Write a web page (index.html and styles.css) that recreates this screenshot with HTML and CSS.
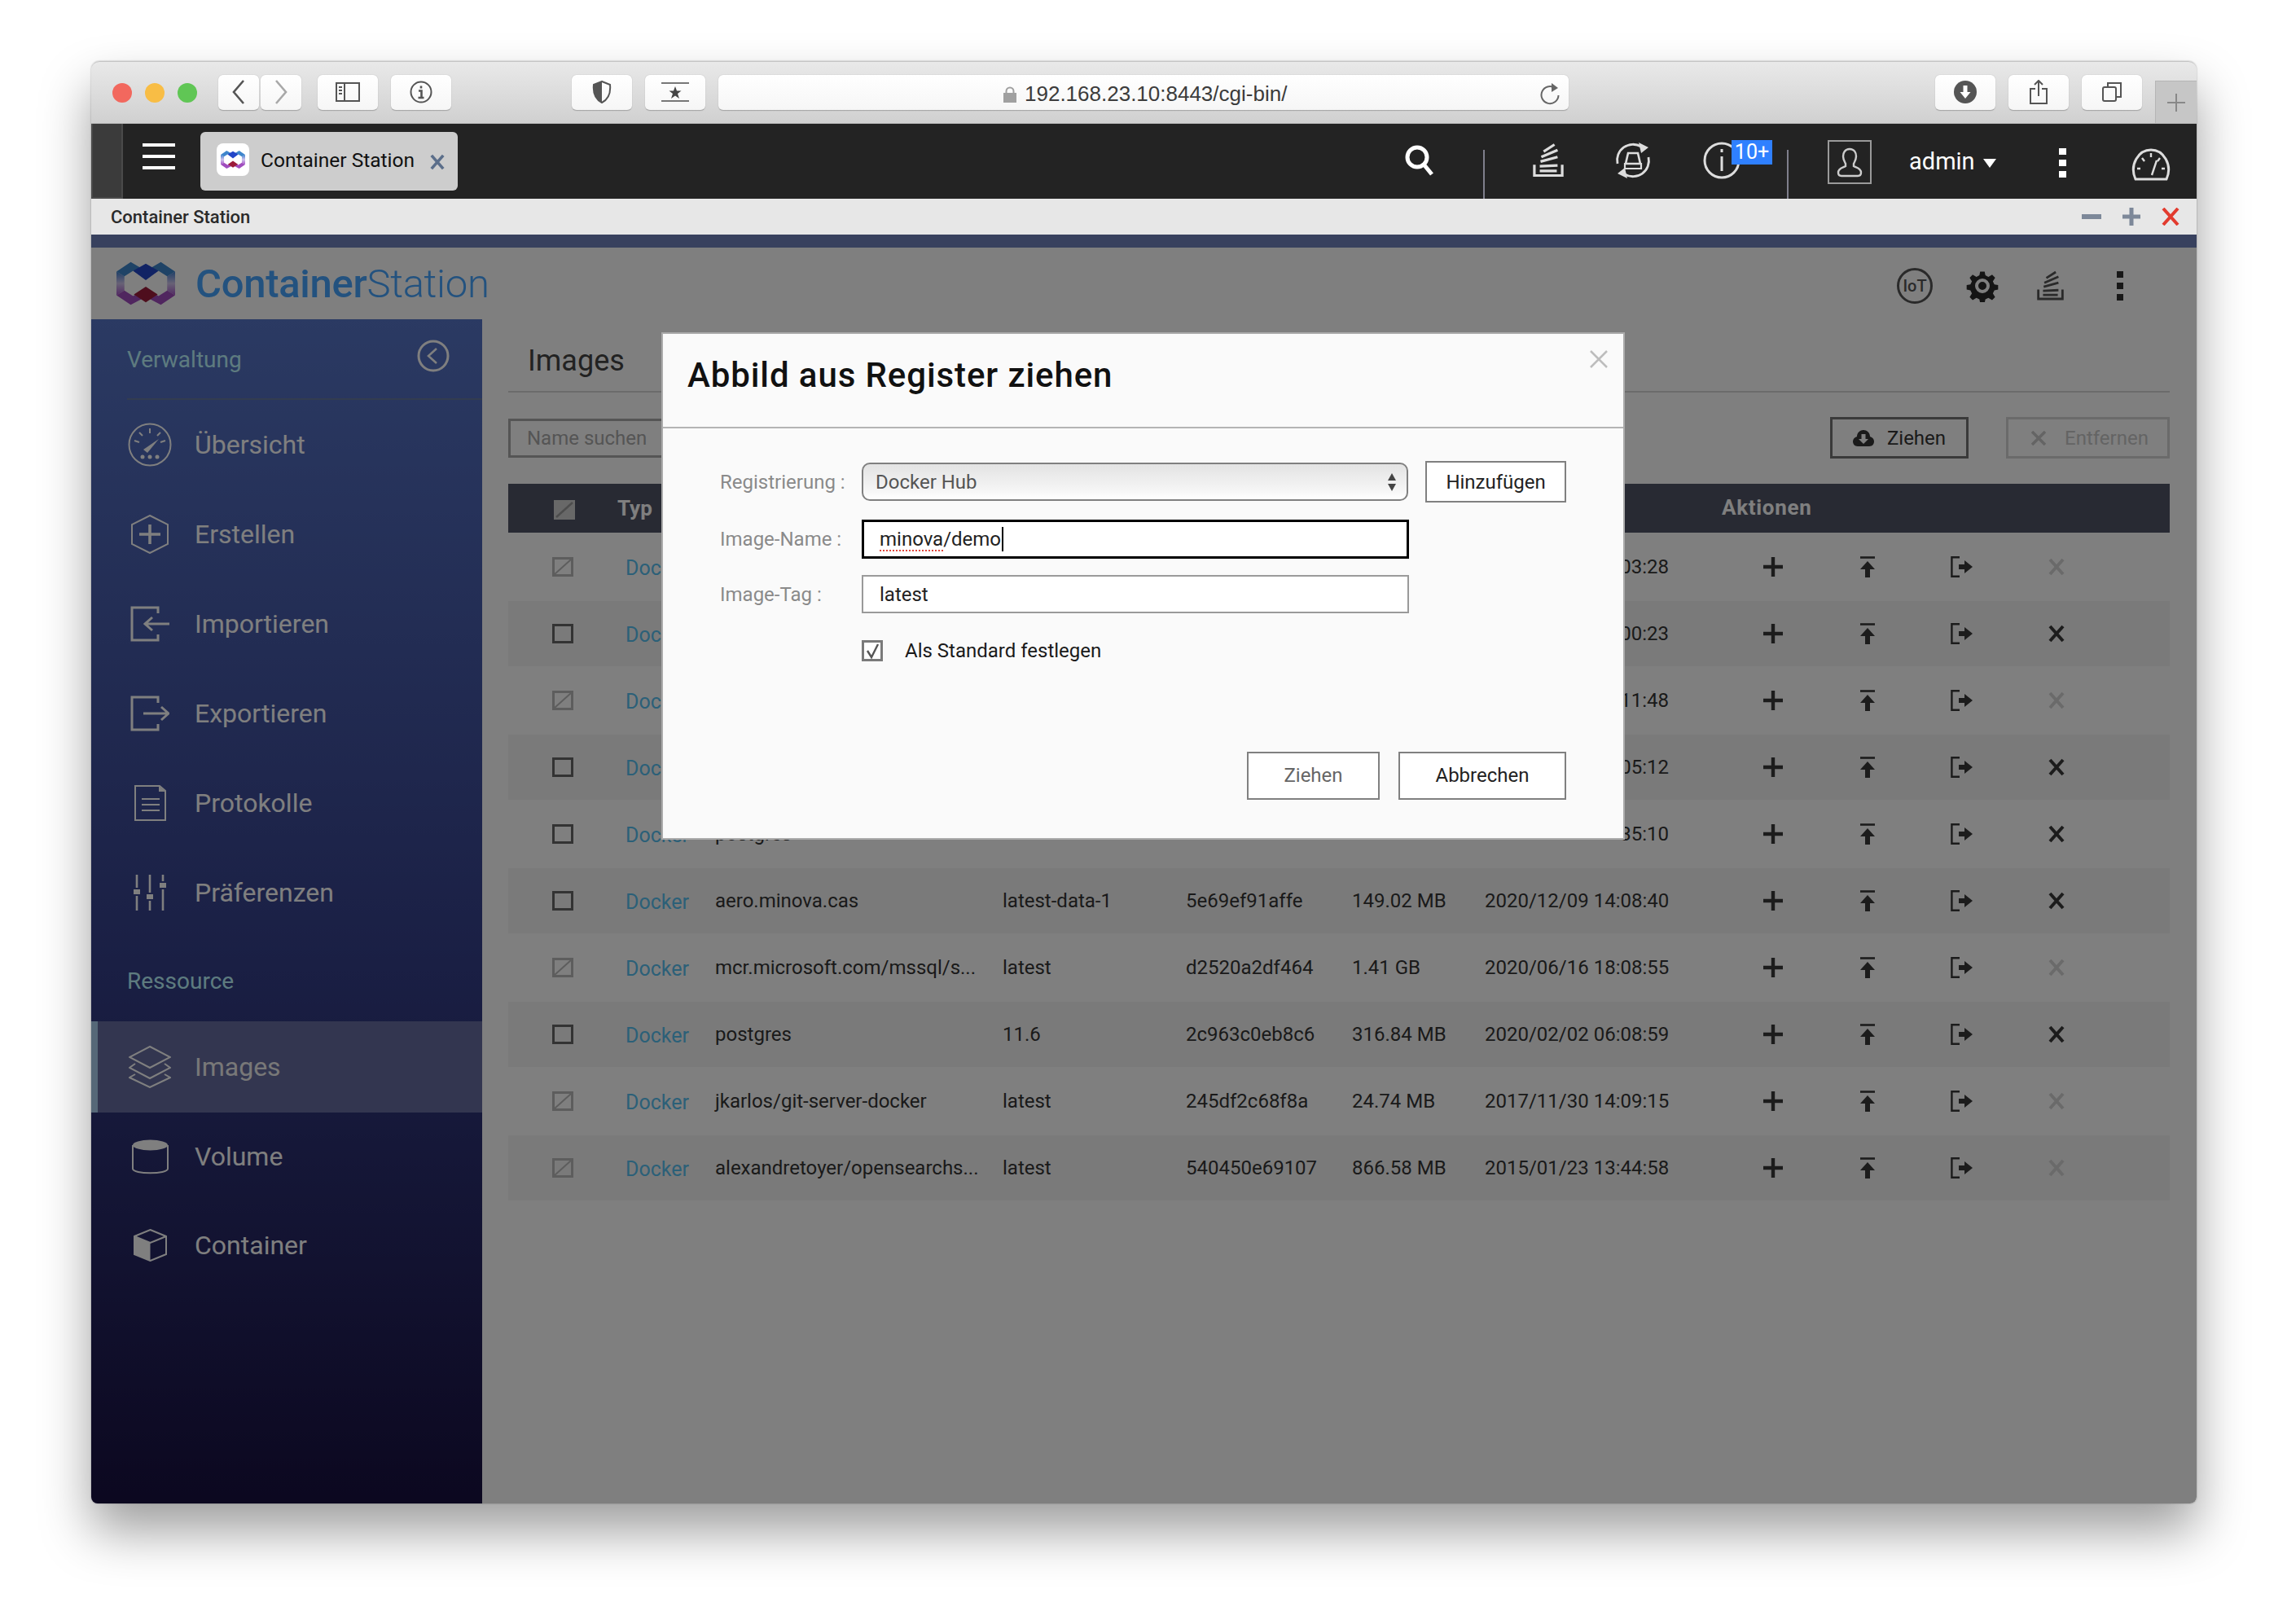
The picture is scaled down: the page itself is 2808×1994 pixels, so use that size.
FILE: index.html
```html
<!DOCTYPE html>
<html lang="de">
<head>
<meta charset="utf-8">
<title>Container Station</title>
<link rel="stylesheet" href="styles.css">
</head>
<body>
<svg class="sprite" xmlns="http://www.w3.org/2000/svg">
  <defs>
    <linearGradient id="lg-side" x1="0" y1="0" x2="0" y2="1">
      <stop offset="0" stop-color="#3f7fd0"/><stop offset=".5" stop-color="#d0c4ec"/><stop offset="1" stop-color="#a655c8"/>
    </linearGradient>
    <symbol id="i-logo" viewBox="0 0 74 56">
      <polygon points="0,13 10,19 10,37 0,43" fill="url(#lg-side)"/>
      <polygon points="74,13 64,19 64,37 74,43" fill="url(#lg-side)"/>
      <polygon points="0,13 18,1 37,12 56,1 74,13 64,19 53,12 37,22 21,12 10,19" fill="#3f86cc"/>
      <polygon points="21,12 37,3 53,12 37,24" fill="#2346c8"/>
      <polygon points="0,43 10,37 21,44 37,34 53,44 64,37 74,43 56,55 37,45 18,55" fill="#a04dbe"/>
      <polygon points="22,42 37,32 52,42 37,52" fill="#9c1c3a"/>
    </symbol>
    <symbol id="i-plus" viewBox="0 0 26 26"><path d="M13 1v24M1 13h24" fill="none" stroke="currentColor" stroke-width="4.4"/></symbol>
    <symbol id="i-up" viewBox="0 0 20 26"><path d="M1 1.500h18" stroke="currentColor" stroke-width="2.600" fill="none"/><path d="M10 6l9 10h-6v10H7V16H1z" fill="currentColor"/></symbol>
    <symbol id="i-exp" viewBox="0 0 28 26"><path d="M11 1.200H1.400v23.600H11" fill="none" stroke="currentColor" stroke-width="2.400"/><path d="M10 10h7V5l10 8-10 8v-5h-7z" fill="currentColor"/></symbol>
    <symbol id="i-x" viewBox="0 0 20 22"><path d="M2 2l16 18M18 2L2 20" fill="none" stroke="currentColor" stroke-width="4"/></symbol>
    <symbol id="i-cb" viewBox="0 0 26 24"><rect x="1.500" y="1.500" width="23" height="21" fill="none" stroke="currentColor" stroke-width="3"/></symbol>
    <symbol id="i-cbd" viewBox="0 0 26 24"><rect x="1.500" y="1.500" width="23" height="21" fill="none" stroke="currentColor" stroke-width="3"/><path d="M3 21L23 3" stroke="currentColor" stroke-width="2" fill="none"/></symbol>
    <symbol id="i-stack" viewBox="0 0 40 44"><path d="M2 28v14h36V28" fill="none" stroke="currentColor" stroke-width="3.400"/><path d="M9 36h22M9 30l23-1M10 24l22-6M11 18l21-9M14 11l14-9" fill="none" stroke="currentColor" stroke-width="3.400"/></symbol>
    <symbol id="i-gear" viewBox="0 0 40 40"><path d="M17 1h6l1 5 4 2 5-3 4 4-3 5 2 4 5 1v6l-5 1-2 4 3 5-4 4-5-3-4 2-1 5h-6l-1-5-4-2-5 3-4-4 3-5-2-4-5-1v-6l5-1 2-4-3-5 4-4 5 3 4-2z" transform="translate(1.600 1.600) scale(.92)" fill="currentColor"/><circle cx="20" cy="20" r="7" fill="none" stroke="#fff" stroke-width="4"/></symbol>
    <symbol id="i-gauge" viewBox="0 0 50 40"><path d="M6 38C-2 20 10 2 25 2s27 18 19 36z" fill="none" stroke="currentColor" stroke-width="3"/><path d="M26 33l6-18M8 25h4M38 25h4M14 12l3 4M36 12l-3 4M25 6v5" fill="none" stroke="currentColor" stroke-width="2.400"/></symbol>
    <symbol id="i-dash" viewBox="0 0 54 54"><circle cx="27" cy="27" r="25.500" fill="none" stroke="currentColor" stroke-width="2"/><path d="M8 22l6 2M14 12l4 4M27 7v6M40 12l-4 4M46 22l-6 2" fill="none" stroke="currentColor" stroke-width="2"/><path d="M19 33l19-13-14 17z" fill="currentColor"/><circle cx="18" cy="42" r="2.500" fill="currentColor"/><circle cx="27" cy="42" r="2.500" fill="currentColor"/><circle cx="36" cy="42" r="2.500" fill="currentColor"/></symbol>
    <symbol id="i-create" viewBox="0 0 46 48"><path d="M23 1l22 11v24L23 47 1 36V12z" fill="none" stroke="currentColor" stroke-width="2"/><path d="M23 12v24M10 24h26" stroke="currentColor" stroke-width="3.600" fill="none"/></symbol>
    <symbol id="i-import" viewBox="0 0 48 44"><path d="M34 9V2H2v40h32v-7" fill="none" stroke="currentColor" stroke-width="3"/><path d="M48 22H18M27 14l-9 8 9 8" fill="none" stroke="currentColor" stroke-width="3"/></symbol>
    <symbol id="i-export" viewBox="0 0 48 44"><path d="M34 9V2H2v40h32v-7" fill="none" stroke="currentColor" stroke-width="3"/><path d="M16 22h30M38 14l9 8-9 8" fill="none" stroke="currentColor" stroke-width="3"/></symbol>
    <symbol id="i-log" viewBox="0 0 39 44"><path d="M1 1h30l7 6v36H1z" fill="none" stroke="currentColor" stroke-width="2"/><path d="M30 1l8 7h-8z" fill="currentColor"/><path d="M9 17h22M9 24h22M9 31h22" stroke="currentColor" stroke-width="1.800" fill="none"/></symbol>
    <symbol id="i-pref" viewBox="0 0 40 44"><path d="M4 0v16M4 26v18M20 0v22M20 32v12M36 0v8M36 18v26" stroke="currentColor" stroke-width="2.600" fill="none"/><rect x="0" y="18" width="8" height="6" fill="currentColor"/><rect x="16" y="24" width="8" height="6" fill="currentColor"/><rect x="32" y="10" width="8" height="6" fill="currentColor"/></symbol>
    <symbol id="i-layers" viewBox="0 0 52 52"><path d="M26 1l25 13-25 13L1 14z" fill="none" stroke="currentColor" stroke-width="2"/><path d="M8 22l-7 5 25 13 25-13-7-5M8 35l-7 4 25 12 25-12-7-4" fill="none" stroke="currentColor" stroke-width="2"/></symbol>
    <symbol id="i-vol" viewBox="0 0 45 44"><path d="M1 8v29c0 7 43 7 43 0V8" fill="none" stroke="currentColor" stroke-width="2"/><ellipse cx="22.500" cy="8" rx="21.500" ry="6.500" fill="currentColor"/></symbol>
    <symbol id="i-box" viewBox="0 0 41 40"><path d="M20.500 1L40 9v22l-19.500 8L1 31V9z" fill="none" stroke="currentColor" stroke-width="2"/><path d="M1 9l19.500 8L40 9" fill="none" stroke="currentColor" stroke-width="2"/><path d="M1 9l19.500 8v22L1 31z" fill="currentColor"/></symbol>
  </defs>
</svg>

<div class="window">
  <header class="chrome">
    <span class="light red"></span><span class="light yellow"></span><span class="light green"></span>
    <button class="cbtn nav first"><svg width="18" height="32" viewBox="0 0 18 32"><path d="M15 2L3 16l12 14" fill="none" stroke="#555" stroke-width="2.600"/></svg></button>
    <button class="cbtn nav"><svg width="18" height="32" viewBox="0 0 18 32"><path d="M3 2l12 14L3 30" fill="none" stroke="#a8a8a8" stroke-width="2.600"/></svg></button>
    <button class="cbtn w74 gap20"><svg width="30" height="24" viewBox="0 0 30 24"><rect x="1" y="1" width="28" height="22" fill="none" stroke="#555" stroke-width="2"/><path d="M11 1v22M4 6h4M4 10h4M4 14h4" stroke="#555" stroke-width="2" fill="none"/></svg></button>
    <button class="cbtn w74 gap16"><svg width="28" height="28" viewBox="0 0 28 28"><circle cx="14" cy="14" r="12.500" fill="none" stroke="#555" stroke-width="2"/><path d="M14 6.500v3M11 12.500h3.500V21M10.500 21h7" fill="none" stroke="#555" stroke-width="2.600"/></svg></button>
    <button class="cbtn w74 gap148"><svg width="24" height="28" viewBox="0 0 24 28"><path d="M12 1l10 4c1 10-2 18-10 22C4 23 1 15 2 5z" fill="none" stroke="#555" stroke-width="2"/><path d="M12 1L2 5c-1 10 2 18 10 22z" fill="#555"/></svg></button>
    <button class="cbtn w74 gap16"><svg width="36" height="24" viewBox="0 0 36 24"><path d="M1 1h34M1 23h34" stroke="#777" stroke-width="2" fill="none"/><path d="M18 5l2 5.500h5.500l-4.500 3.500 2 6-5-3.500-5 3.500 2-6-4.500-3.500H16z" fill="#444"/></svg></button>
    <div class="address">
      <div class="address-text"><svg class="lock" width="16" height="20" viewBox="0 0 16 20"><path d="M3.500 9V6a4.500 4.500 0 0 1 9 0v3" fill="none" stroke="#a0a0a0" stroke-width="2"/><rect y="8" width="16" height="12" fill="#a0a0a0"/></svg><span>192.168.23.10:8443/cgi-bin/</span></div>
      <svg class="reload" width="26" height="28" viewBox="0 0 26 28"><path d="M19 7A10.500 10.500 0 1 0 23.500 16" fill="none" stroke="#666" stroke-width="2"/><path d="M15 1l8 6-8 5z" fill="#666"/></svg>
    </div>
    <button class="cbtn w74 gap450"><svg width="28" height="28" viewBox="0 0 28 28"><circle cx="14" cy="14" r="14" fill="#555"/><path d="M11.500 6h5v8h4L14 22l-6.500-8h4z" fill="#fff"/></svg></button>
    <button class="cbtn w74 gap16"><svg width="22" height="30" viewBox="0 0 22 30"><path d="M7 11H1v18h20V11h-6M11 20V2M6 6l5-5 5 5" fill="none" stroke="#555" stroke-width="2"/></svg></button>
    <button class="cbtn w74 gap16"><svg width="24" height="24" viewBox="0 0 24 24"><rect x="1" y="6" width="16" height="17" rx="2" fill="none" stroke="#555" stroke-width="2"/><path d="M7 5V1h16v17h-5" fill="none" stroke="#555" stroke-width="2"/></svg></button>
    <div class="newtab"><svg width="24" height="24" viewBox="0 0 24 24"><path d="M12 1v22M1 12h22" stroke="#888" stroke-width="2"/></svg></div>
  </header>

  <nav class="topbar">
    <div class="top-edge"></div>
    <div class="burger"><i></i><i></i><i></i></div>
    <div class="app-tab">
      <span class="tab-icon"><svg width="30" height="24"><use href="#i-logo"/></svg></span>
      <span class="tab-label">Container Station</span>
      <svg class="tab-x" width="18" height="20"><use href="#i-x"/></svg>
    </div>
    <div class="top-icons">
      <svg class="ti-search" width="36" height="38" viewBox="0 0 36 38"><circle cx="15" cy="15" r="12" fill="none" stroke="#fff" stroke-width="5"/><path d="M24 25l9 11" stroke="#fff" stroke-width="5"/></svg>
      <span class="vsep vsep1"></span>
      <svg class="ti ti-stack" width="38" height="43"><use href="#i-stack"/></svg>
      <svg class="ti ti-sync" width="46" height="46" viewBox="0 0 46 46"><path d="M4 27A19.500 19.500 0 0 1 33 6M42 19A19.500 19.500 0 0 1 13 40" fill="none" stroke="#ddd" stroke-width="2.800"/><path d="M30 1l12 6-9 7zM16 45L4 39l9-7z" fill="#ddd"/><path d="M17 14h12l3 13H14z" fill="none" stroke="#ddd" stroke-width="2.600"/><path d="M13 27h20v6H13z" fill="none" stroke="#ddd" stroke-width="2.200"/></svg>
      <span class="info-wrap">
        <svg class="ti" width="46" height="46" viewBox="0 0 46 46"><circle cx="23" cy="23" r="21" fill="none" stroke="#ddd" stroke-width="3"/><path d="M23 9v4M23 18v18" stroke="#ddd" stroke-width="3"/></svg>
        <span class="badge">10+</span>
      </span>
      <span class="vsep vsep2"></span>
      <span class="avatar"><svg width="44" height="44" viewBox="0 0 44 44"><path d="M22 6c-6 0-8 5-8 9 0 4 2 7 3 9v3c-3 2-9 2-9 8 0 3 2 4 4 4h20c2 0 4-1 4-4 0-6-6-6-9-8v-3c1-2 3-5 3-9 0-4-2-9-8-9z" fill="none" stroke="#ccc" stroke-width="2.400"/></svg></span>
      <span class="admin">admin</span><span class="caret"></span>
      <span class="kebab light-k"><i></i><i></i><i></i></span>
      <svg class="ti ti-gauge" width="50" height="40"><use href="#i-gauge"/></svg>
    </div>
  </nav>

  <div class="titlebar">
    <span class="title-text">Container Station</span>
    <div class="win-ctl">
      <span class="ctl-min"></span>
      <svg class="ctl-plus" width="22" height="22" viewBox="0 0 22 22"><path d="M11 0v22M0 11h22" stroke="#7d8899" stroke-width="5"/></svg>
      <svg class="ctl-x" width="22" height="22" viewBox="0 0 22 22"><path d="M2 1l18 20M20 1L2 21" stroke="#e23b2e" stroke-width="4"/></svg>
    </div>
  </div>
  <div class="stripe"></div>

  <div class="app">
    <div class="app-head">
      <svg class="logo" width="74" height="56"><use href="#i-logo"/></svg>
      <span class="logo-text"><b>Container</b>Station</span>
      <div class="head-icons">
        <span class="iot">IoT</span>
        <svg class="gear" width="40" height="40"><use href="#i-gear"/></svg>
        <svg class="hstack" width="33" height="37"><use href="#i-stack"/></svg>
        <span class="kebab dark-k"><i></i><i></i><i></i></span>
      </div>
    </div>
    <div class="app-body">
      <aside class="side">
        <div class="side-head">
          <span class="side-label">Verwaltung</span>
          <svg class="collapse" width="40" height="40" viewBox="0 0 40 40"><circle cx="20" cy="20" r="18" fill="none" stroke="#fff" stroke-width="3"/><path d="M24 11l-10 9 10 9" fill="none" stroke="#fff" stroke-width="2.500"/></svg>
        </div>
        <div class="item"><span class="ico"><svg width="54" height="54"><use href="#i-dash"/></svg></span>Übersicht</div>
        <div class="item"><span class="ico"><svg width="46" height="48"><use href="#i-create"/></svg></span>Erstellen</div>
        <div class="item"><span class="ico"><svg width="48" height="44"><use href="#i-import"/></svg></span>Importieren</div>
        <div class="item"><span class="ico"><svg width="48" height="44"><use href="#i-export"/></svg></span>Exportieren</div>
        <div class="item"><span class="ico"><svg width="39" height="44"><use href="#i-log"/></svg></span>Protokolle</div>
        <div class="item"><span class="ico"><svg width="40" height="44"><use href="#i-pref"/></svg></span>Präferenzen</div>
        <div class="side-section"><span class="side-label">Ressource</span></div>
        <div class="item active"><span class="ico"><svg width="52" height="52"><use href="#i-layers"/></svg></span>Images</div>
        <div class="item"><span class="ico"><svg width="45" height="44"><use href="#i-vol"/></svg></span>Volume</div>
        <div class="item"><span class="ico"><svg width="41" height="40"><use href="#i-box"/></svg></span>Container</div>
      </aside>
      <main class="main">
        <h1 class="page-title">Images</h1>
        <div class="tools">
          <div class="search">Name suchen</div>
          <button class="tbtn pull"><svg width="26" height="22" viewBox="0 0 26 22"><path d="M6 21C2 21 0 18 0 15c0-3 2-5 5-6 0-5 4-8 8-8s8 3 8 8c3 1 5 3 5 6s-2 6-6 6z" fill="#343434"/><path d="M10.500 6h5v6h3.500l-6 6-6-6h3.500z" fill="#fff"/></svg>Ziehen</button>
          <button class="tbtn remove"><svg width="18" height="18" viewBox="0 0 18 18"><path d="M1 1l16 16M17 1L1 17" stroke="#c8c8c8" stroke-width="3.500"/></svg>Entfernen</button>
        </div>
        <div class="grid">
          <div class="ghead">
            <span class="gc-check"><svg class="cb-head" width="26" height="24" viewBox="0 0 26 24"><rect width="26" height="24" fill="#d0d0d0"/><path d="M3 21L23 3" stroke="#9a9a9a" stroke-width="2.500"/></svg></span>
            <span class="gh-typ">Typ</span>
            <span class="gh-act">Aktionen</span>
          </div>

          <div class="grow">
            <span class="gc-check"><svg class="cb off" width="26" height="24"><use href="#i-cbd"/></svg></span><span class="link">Docker</span><span></span><span></span><span></span><span></span><span class="tail">03:28</span>
            <span class="act"><svg width="26" height="26"><use href="#i-plus"/></svg></span><span class="act"><svg width="20" height="26"><use href="#i-up"/></svg></span><span class="act"><svg width="28" height="26"><use href="#i-exp"/></svg></span><span class="act off"><svg width="20" height="22"><use href="#i-x"/></svg></span>
          </div>
          <div class="grow">
            <span class="gc-check"><svg class="cb" width="26" height="24"><use href="#i-cb"/></svg></span><span class="link">Docker</span><span></span><span></span><span></span><span></span><span class="tail">00:23</span>
            <span class="act"><svg width="26" height="26"><use href="#i-plus"/></svg></span><span class="act"><svg width="20" height="26"><use href="#i-up"/></svg></span><span class="act"><svg width="28" height="26"><use href="#i-exp"/></svg></span><span class="act"><svg width="20" height="22"><use href="#i-x"/></svg></span>
          </div>
          <div class="grow">
            <span class="gc-check"><svg class="cb off" width="26" height="24"><use href="#i-cbd"/></svg></span><span class="link">Docker</span><span></span><span></span><span></span><span></span><span class="tail">11:48</span>
            <span class="act"><svg width="26" height="26"><use href="#i-plus"/></svg></span><span class="act"><svg width="20" height="26"><use href="#i-up"/></svg></span><span class="act"><svg width="28" height="26"><use href="#i-exp"/></svg></span><span class="act off"><svg width="20" height="22"><use href="#i-x"/></svg></span>
          </div>
          <div class="grow">
            <span class="gc-check"><svg class="cb" width="26" height="24"><use href="#i-cb"/></svg></span><span class="link">Docker</span><span></span><span></span><span></span><span></span><span class="tail">05:12</span>
            <span class="act"><svg width="26" height="26"><use href="#i-plus"/></svg></span><span class="act"><svg width="20" height="26"><use href="#i-up"/></svg></span><span class="act"><svg width="28" height="26"><use href="#i-exp"/></svg></span><span class="act"><svg width="20" height="22"><use href="#i-x"/></svg></span>
          </div>
          <div class="grow">
            <span class="gc-check"><svg class="cb" width="26" height="24"><use href="#i-cb"/></svg></span><span class="link">Docker</span><span>postgres</span><span></span><span></span><span></span><span class="tail">35:10</span>
            <span class="act"><svg width="26" height="26"><use href="#i-plus"/></svg></span><span class="act"><svg width="20" height="26"><use href="#i-up"/></svg></span><span class="act"><svg width="28" height="26"><use href="#i-exp"/></svg></span><span class="act"><svg width="20" height="22"><use href="#i-x"/></svg></span>
          </div>
          <div class="grow">
            <span class="gc-check"><svg class="cb" width="26" height="24"><use href="#i-cb"/></svg></span><span class="link">Docker</span><span>aero.minova.cas</span><span>latest-data-1</span><span>5e69ef91affe</span><span>149.02 MB</span><span>2020/12/09 14:08:40</span>
            <span class="act"><svg width="26" height="26"><use href="#i-plus"/></svg></span><span class="act"><svg width="20" height="26"><use href="#i-up"/></svg></span><span class="act"><svg width="28" height="26"><use href="#i-exp"/></svg></span><span class="act"><svg width="20" height="22"><use href="#i-x"/></svg></span>
          </div>
          <div class="grow">
            <span class="gc-check"><svg class="cb off" width="26" height="24"><use href="#i-cbd"/></svg></span><span class="link">Docker</span><span>mcr.microsoft.com/mssql/s...</span><span>latest</span><span>d2520a2df464</span><span>1.41 GB</span><span>2020/06/16 18:08:55</span>
            <span class="act"><svg width="26" height="26"><use href="#i-plus"/></svg></span><span class="act"><svg width="20" height="26"><use href="#i-up"/></svg></span><span class="act"><svg width="28" height="26"><use href="#i-exp"/></svg></span><span class="act off"><svg width="20" height="22"><use href="#i-x"/></svg></span>
          </div>
          <div class="grow">
            <span class="gc-check"><svg class="cb" width="26" height="24"><use href="#i-cb"/></svg></span><span class="link">Docker</span><span>postgres</span><span>11.6</span><span>2c963c0eb8c6</span><span>316.84 MB</span><span>2020/02/02 06:08:59</span>
            <span class="act"><svg width="26" height="26"><use href="#i-plus"/></svg></span><span class="act"><svg width="20" height="26"><use href="#i-up"/></svg></span><span class="act"><svg width="28" height="26"><use href="#i-exp"/></svg></span><span class="act"><svg width="20" height="22"><use href="#i-x"/></svg></span>
          </div>
          <div class="grow">
            <span class="gc-check"><svg class="cb off" width="26" height="24"><use href="#i-cbd"/></svg></span><span class="link">Docker</span><span>jkarlos/git-server-docker</span><span>latest</span><span>245df2c68f8a</span><span>24.74 MB</span><span>2017/11/30 14:09:15</span>
            <span class="act"><svg width="26" height="26"><use href="#i-plus"/></svg></span><span class="act"><svg width="20" height="26"><use href="#i-up"/></svg></span><span class="act"><svg width="28" height="26"><use href="#i-exp"/></svg></span><span class="act off"><svg width="20" height="22"><use href="#i-x"/></svg></span>
          </div>
          <div class="grow">
            <span class="gc-check"><svg class="cb off" width="26" height="24"><use href="#i-cbd"/></svg></span><span class="link">Docker</span><span>alexandretoyer/opensearchs...</span><span>latest</span><span>540450e69107</span><span>866.58 MB</span><span>2015/01/23 13:44:58</span>
            <span class="act"><svg width="26" height="26"><use href="#i-plus"/></svg></span><span class="act"><svg width="20" height="26"><use href="#i-up"/></svg></span><span class="act"><svg width="28" height="26"><use href="#i-exp"/></svg></span><span class="act off"><svg width="20" height="22"><use href="#i-x"/></svg></span>
          </div>
        </div>
      </main>
    </div>

    <div class="backdrop"></div>
    <section class="dialog">
      <header class="dlg-head">
        <h2 class="dlg-title">Abbild aus Register ziehen</h2>
        <svg class="dlg-close" width="24" height="24" viewBox="0 0 24 24"><path d="M2 2l20 20M22 2L2 22" stroke="#bdbdbd" stroke-width="2.500"/></svg>
      </header>
      <div class="dlg-body">
        <div class="frow f-reg">
          <label class="flabel">Registrierung :</label>
          <div class="fselect"><span>Docker Hub</span><svg width="12" height="24" viewBox="0 0 12 24"><path d="M6 1l5 9H1zM6 23l5-9H1z" fill="#444"/></svg></div>
          <button class="dbtn add">Hinzufügen</button>
        </div>
        <div class="frow f-name">
          <label class="flabel">Image-Name :</label>
          <div class="finput focus"><span class="spell">minova</span>/demo<span class="textcaret"></span></div>
        </div>
        <div class="frow f-tag">
          <label class="flabel">Image-Tag :</label>
          <div class="finput">latest</div>
        </div>
        <div class="frow f-check">
          <span class="flabel"></span>
          <svg class="dlg-cb" width="26" height="26" viewBox="0 0 26 26"><rect x="1.500" y="1.500" width="23" height="23" fill="#fff" stroke="#7a7a7a" stroke-width="3"/><path d="M7 13l5 8 8-16" fill="none" stroke="#555" stroke-width="2.400"/></svg>
          <span class="check-label">Als Standard festlegen</span>
        </div>
      </div>
      <footer class="dlg-foot">
        <button class="dbtn big zieh">Ziehen</button>
        <button class="dbtn big abb">Abbrechen</button>
      </footer>
    </section>
  </div>
</div>
</body>
</html>
```

FILE: styles.css
```css
* { box-sizing: border-box; }
html, body { margin: 0; background: #fff; }
body {
  width: 2808px;
  height: 1994px;
  padding: 75px 0 0 112px;
  overflow: hidden;
  font-family: Roboto, "Liberation Sans", sans-serif;
}
button { font-family: inherit; margin: 0; padding: 0; }
h1, h2 { margin: 0; font-weight: 400; }
.sprite { display: block; width: 0; height: 0; overflow: hidden; }

.window {
  width: 2585px;
  height: 1771px;
  display: flex;
  flex-direction: column;
  border-radius: 10px 10px 8px 8px;
  box-shadow: 0 34px 62px rgba(0,0,0,.38), 0 0 2px rgba(0,0,0,.35);
  background: #fff;
}

/* Browser chrome */
.chrome {
  height: 77px;
  flex: none;
  display: flex;
  align-items: center;
  padding: 0 0 0 26px;
  background: linear-gradient(#e9e9e9, #d0d0d0);
  border-top: 1px solid #c4c4c4;
  border-radius: 10px 10px 0 0;
  border-bottom: 1px solid #b8b8b8;
  position: relative;
}
.light { width: 24px; height: 24px; border-radius: 50%; margin-right: 16px; flex: none; }
.red { background: #f2685e; }
.yellow { background: #f8bd45; }
.green { background: #60c655; margin-right: 26px; }
.cbtn {
  height: 44px;
  flex: none;
  display: flex;
  align-items: center;
  justify-content: center;
  background: linear-gradient(#fff, #f6f6f6);
  border: 0;
  border-bottom: 1px solid #a9a9a9;
  box-shadow: 0 0 1px rgba(0,0,0,.35);
  border-radius: 6px;
}
.nav { width: 50px; }
.nav.first { margin-right: 2px; }
.w74 { width: 74px; }
.gap20 { margin-left: 20px; }
.gap16 { margin-left: 16px; }
.gap148 { margin-left: 148px; }
.gap450 { margin-left: 450px; }
.address {
  flex: none;
  width: 1044px;
  height: 44px;
  margin-left: 16px;
  display: flex;
  align-items: center;
  position: relative;
  background: linear-gradient(#fff, #f6f6f6);
  border-bottom: 1px solid #a9a9a9;
  box-shadow: 0 0 1px rgba(0,0,0,.35);
  border-radius: 6px;
}
.address-text {
  margin: 5px 0 0 350px;
  display: flex;
  align-items: center;
  gap: 10px;
  font: 26px "Liberation Sans", Arial, sans-serif;
  color: #3c3c3c;
}
.reload { position: absolute; right: 10px; top: 9px; }
.newtab {
  width: 51px;
  height: 52px;
  margin-left: 16px;
  align-self: flex-end;
  display: flex;
  align-items: center;
  justify-content: center;
  background: #c6c6c6;
  border: 1px solid #b5b5b5;
  border-width: 1px 0 0 1px;
}

/* QTS top bar */
.topbar {
  height: 92px;
  flex: none;
  display: flex;
  align-items: stretch;
  background: #232323;
  color: #fff;
}
.top-edge { width: 39px; flex: none; background: #3b3b3b; border: 2px solid #4a4a4a; border-top-width: 0; }
.burger { width: 40px; margin: 24px 0 0 24px; flex: none; display: flex; flex-direction: column; gap: 10px; }
.burger i { display: block; height: 4px; background: #fff; }
.app-tab {
  width: 316px;
  height: 72px;
  margin: 10px 0 0 31px;
  flex: none;
  display: flex;
  align-items: flex-start;
  background: #cdcdcd;
  border-radius: 6px;
  color: #111;
}
.tab-icon {
  width: 40px;
  height: 40px;
  margin: 14px 0 0 20px;
  background: #fff;
  border-radius: 8px;
  display: flex;
  align-items: center;
  justify-content: center;
  flex: none;
}
.tab-label { font-size: 24.500px; line-height: 30px; margin: 20px 0 0 14px; white-space: nowrap; }
.tab-x { margin: 27px 0 0 19px; color: #5b6e8a; }
.top-icons { flex: 1; display: flex; align-items: flex-start; position: relative; }
.ti { color: #ddd; }
.ti-search { margin: 26px 0 0 1163px; }
.vsep { width: 2px; height: 60px; margin-top: 32px; background: #7f7f8c; flex: none; }
.vsep1 { margin-left: 60px; }
.ti-stack { margin: 23px 0 0 59px; }
.ti-sync { margin: 22px 0 0 62px; }
.info-wrap { width: 46px; height: 46px; margin: 22px 0 0 63px; position: relative; flex: none; }
.badge {
  position: absolute;
  left: 35px;
  top: -2px;
  width: 50px;
  height: 30px;
  background: #2f80ff;
  color: #fff;
  font-size: 25px;
  line-height: 30px;
  text-align: center;
}
.vsep2 { margin-left: 57px; }
.avatar {
  width: 54px;
  height: 54px;
  margin: 20px 0 0 48px;
  border: 2px solid #9a9a9a;
  display: flex;
  align-items: center;
  justify-content: center;
  flex: none;
}
.admin { margin: 28px 0 0 46px; font-size: 29px; line-height: 36px; }
.caret {
  margin: 43px 0 0 10px;
  border-left: 8px solid transparent;
  border-right: 8px solid transparent;
  border-top: 11px solid #fff;
}
.kebab { display: flex; flex-direction: column; gap: 6px; flex: none; }
.kebab i { display: block; width: 8px; height: 8px; }
.light-k { margin: 30px 0 0 77px; }
.light-k i { background: #fff; width: 9px; }
.ti-gauge { margin: 30px 0 0 79px; }

/* Window title */
.titlebar {
  height: 44px;
  flex: none;
  display: flex;
  align-items: center;
  justify-content: space-between;
  padding: 0 21px 0 24px;
  background: #e7e7e7;
}
.title-text { font-size: 22px; font-weight: 500; color: #2a2a2a; }
.win-ctl { display: flex; align-items: center; gap: 26px; }
.ctl-min { width: 24px; height: 6px; background: #7d8899; }
.stripe { height: 16px; flex: none; background: #38415e; }

/* App underneath the backdrop */
.app { flex: 1; min-height: 0; position: relative; display: flex; flex-direction: column; background: #fff; border-radius: 0 0 8px 8px; overflow: hidden; }
.app-head { height: 88px; flex: none; display: flex; align-items: center; padding-left: 31px; }
.logo { margin-top: -1px; width: 72px; }
.logo-text { margin: 1px 0 0 25px; font-size: 49px; font-weight: 300; color: #46a4fe; letter-spacing: -.3px; }
.logo-text b { font-weight: 500; }
.head-icons { margin-left: auto; display: flex; align-items: center; color: #303030; margin-top: 5px; }
.iot {
  width: 44px;
  height: 44px;
  border: 3px solid #555;
  border-radius: 50%;
  font-size: 20px;
  font-weight: 500;
  line-height: 38px;
  text-align: center;
  color: #555;
  margin-right: 41px;
}
.gear { color: #2a2a2a; margin-right: 47px; }
.hstack { color: #555; margin-right: 65px; }
.dark-k { margin-right: 90px; }
.dark-k i { background: #303030; }

.app-body { flex: 1; min-height: 0; display: flex; }
.side {
  width: 480px;
  flex: none;
  background: linear-gradient(#5674c6, #343e88 55%, #181040);
  color: #fff;
  font-size: 32px;
}
.side-head {
  height: 99px;
  margin-left: 44px;
  display: flex;
  justify-content: space-between;
  padding: 0 40px 0 0;
  border-bottom: 2px solid #66789f;
}
.side-label { font-size: 28px; color: #bcf6ff; }
.side-head .side-label { margin-top: 33px; }
.collapse { margin-top: 25px; }
.item { height: 110px; display: flex; align-items: center; padding-left: 36px; }
.ico { width: 72px; margin-right: 19px; display: flex; justify-content: center; flex: none; color: #fff; }
.side-section { height: 103px; padding: 33px 0 0 44px; }
.item.active { height: 112px; background: #666ca0; border-left: 8px solid #acd0f0; padding-left: 28px; color: #f0f0f0; }
.item.active + .item { height: 108px; }

.main { flex: 1; min-width: 0; padding: 0 33px 0 32px; }
.page-title { height: 90px; padding: 30px 0 0 24px; border-bottom: 2px solid #d6d6d6; font-size: 36px; line-height: 42px; color: #444; }
.tools { display: flex; align-items: center; height: 51px; margin: 30px 0 31px; }
.search {
  width: 400px;
  height: 48px;
  border: 3px solid #aaa;
  padding-left: 20px;
  font-size: 24px;
  line-height: 42px;
  color: #aaa;
}
.tbtn {
  height: 51px;
  display: flex;
  align-items: center;
  justify-content: center;
  background: transparent;
  border: 3px solid #747474;
  font-size: 24px;
  color: #343434;
}
.pull { width: 170px; gap: 16px; margin-left: auto; }
.remove { width: 201px; gap: 23px; padding-left: 5px; margin-left: 46px; border-color: #d4d4d4; color: #c8c8c8; }

.ghead, .grow {
  display: grid;
  grid-template-columns: 145px 109px 353px 225px 204px 163px 296px 116px 116px 116px 116px 81px;
  align-items: center;
}
.ghead { height: 60px; background: #505466; color: #fff; font-size: 26px; font-weight: 700; }
.gc-check { padding-left: 54px; display: flex; }
.cb-head { margin-left: 2px; margin-top: 4px; }
.gh-typ { margin-left: -11px; color: #fff; }
.gh-act { grid-column: 7 / span 4; margin: -2px 0 0 291px; letter-spacing: .7px; }
.grow { height: 80px; background: #f4f4f4; color: #343434; font-size: 24px; white-space: nowrap; }
.grow:nth-child(even) { height: 84px; background: #fff; }
.grow > span { min-width: 0; }
.cb { color: #666; }
.cb.off { color: #bbb; }
.link { color: #57c0f0; padding-top: 2px; font-size: 25px; margin-left: -1px; }
.tail { width: 226px; text-align: right; }
.act { display: flex; justify-content: center; color: #383838; }
.act.off { color: #d4d4d4; }

/* Modal */
.backdrop { position: absolute; inset: 0; background: rgba(0,0,0,.5); }
.dialog {
  position: absolute;
  left: 700px;
  top: 104px;
  width: 1183px;
  height: 623px;
  display: flex;
  flex-direction: column;
  background: #fafafa;
  border: 2px solid #ababab;
}
.dlg-head { height: 116px; flex: none; position: relative; padding: 26px 0 0 30px; border-bottom: 2px solid #b4b4b4; }
.dlg-title { font-size: 42px; line-height: 50px; font-weight: 500; color: #111; letter-spacing: .9px; }
.dlg-close { position: absolute; right: 18px; top: 19px; }
.dlg-body { flex: 1; padding: 0 70px; font-size: 24px; }
.frow { display: flex; align-items: center; }
.f-reg { margin-top: 40px; height: 51px; }
.f-name { margin-top: 21px; height: 48px; }
.f-tag { margin-top: 20px; height: 47px; }
.f-check { margin-top: 33px; height: 25px; }
.flabel { width: 174px; flex: none; color: #8a8a8a; font-size: 24px; }
.fselect {
  width: 672px;
  height: 47px;
  display: flex;
  align-items: center;
  justify-content: space-between;
  padding: 0 12px 0 15px;
  border: 2px solid #808080;
  border-radius: 10px;
  background: linear-gradient(#e3e3e3, #f4f4f4 70%, #fff);
  color: #555;
}
.add { width: 173px; height: 51px; margin-left: 21px; }
.dbtn { background: #fff; border: 2px solid #808080; font-size: 24px; color: #222; }
.finput {
  width: 672px;
  height: 100%;
  display: flex;
  align-items: center;
  padding-left: 20px;
  background: #fff;
  border: 2px solid #9a9a9a;
  color: #222;
}
.finput.focus { border: 3px solid #000; padding-left: 19px; }
.spell { text-decoration: underline dotted #e0453a 2px; text-underline-offset: 5px; }
.textcaret { width: 2px; height: 30px; background: #000; margin-left: 1px; }
.dlg-cb { flex: none; }
.check-label { margin-left: 27px; color: #1a1a1a; font-size: 24px; }
.dlg-foot { flex: none; display: flex; justify-content: flex-end; gap: 23px; padding: 0 70px 47px 0; }
.big { height: 59px; padding-bottom: 2px; }
.zieh { width: 163px; color: #666; }
.abb { width: 206px; }
```
